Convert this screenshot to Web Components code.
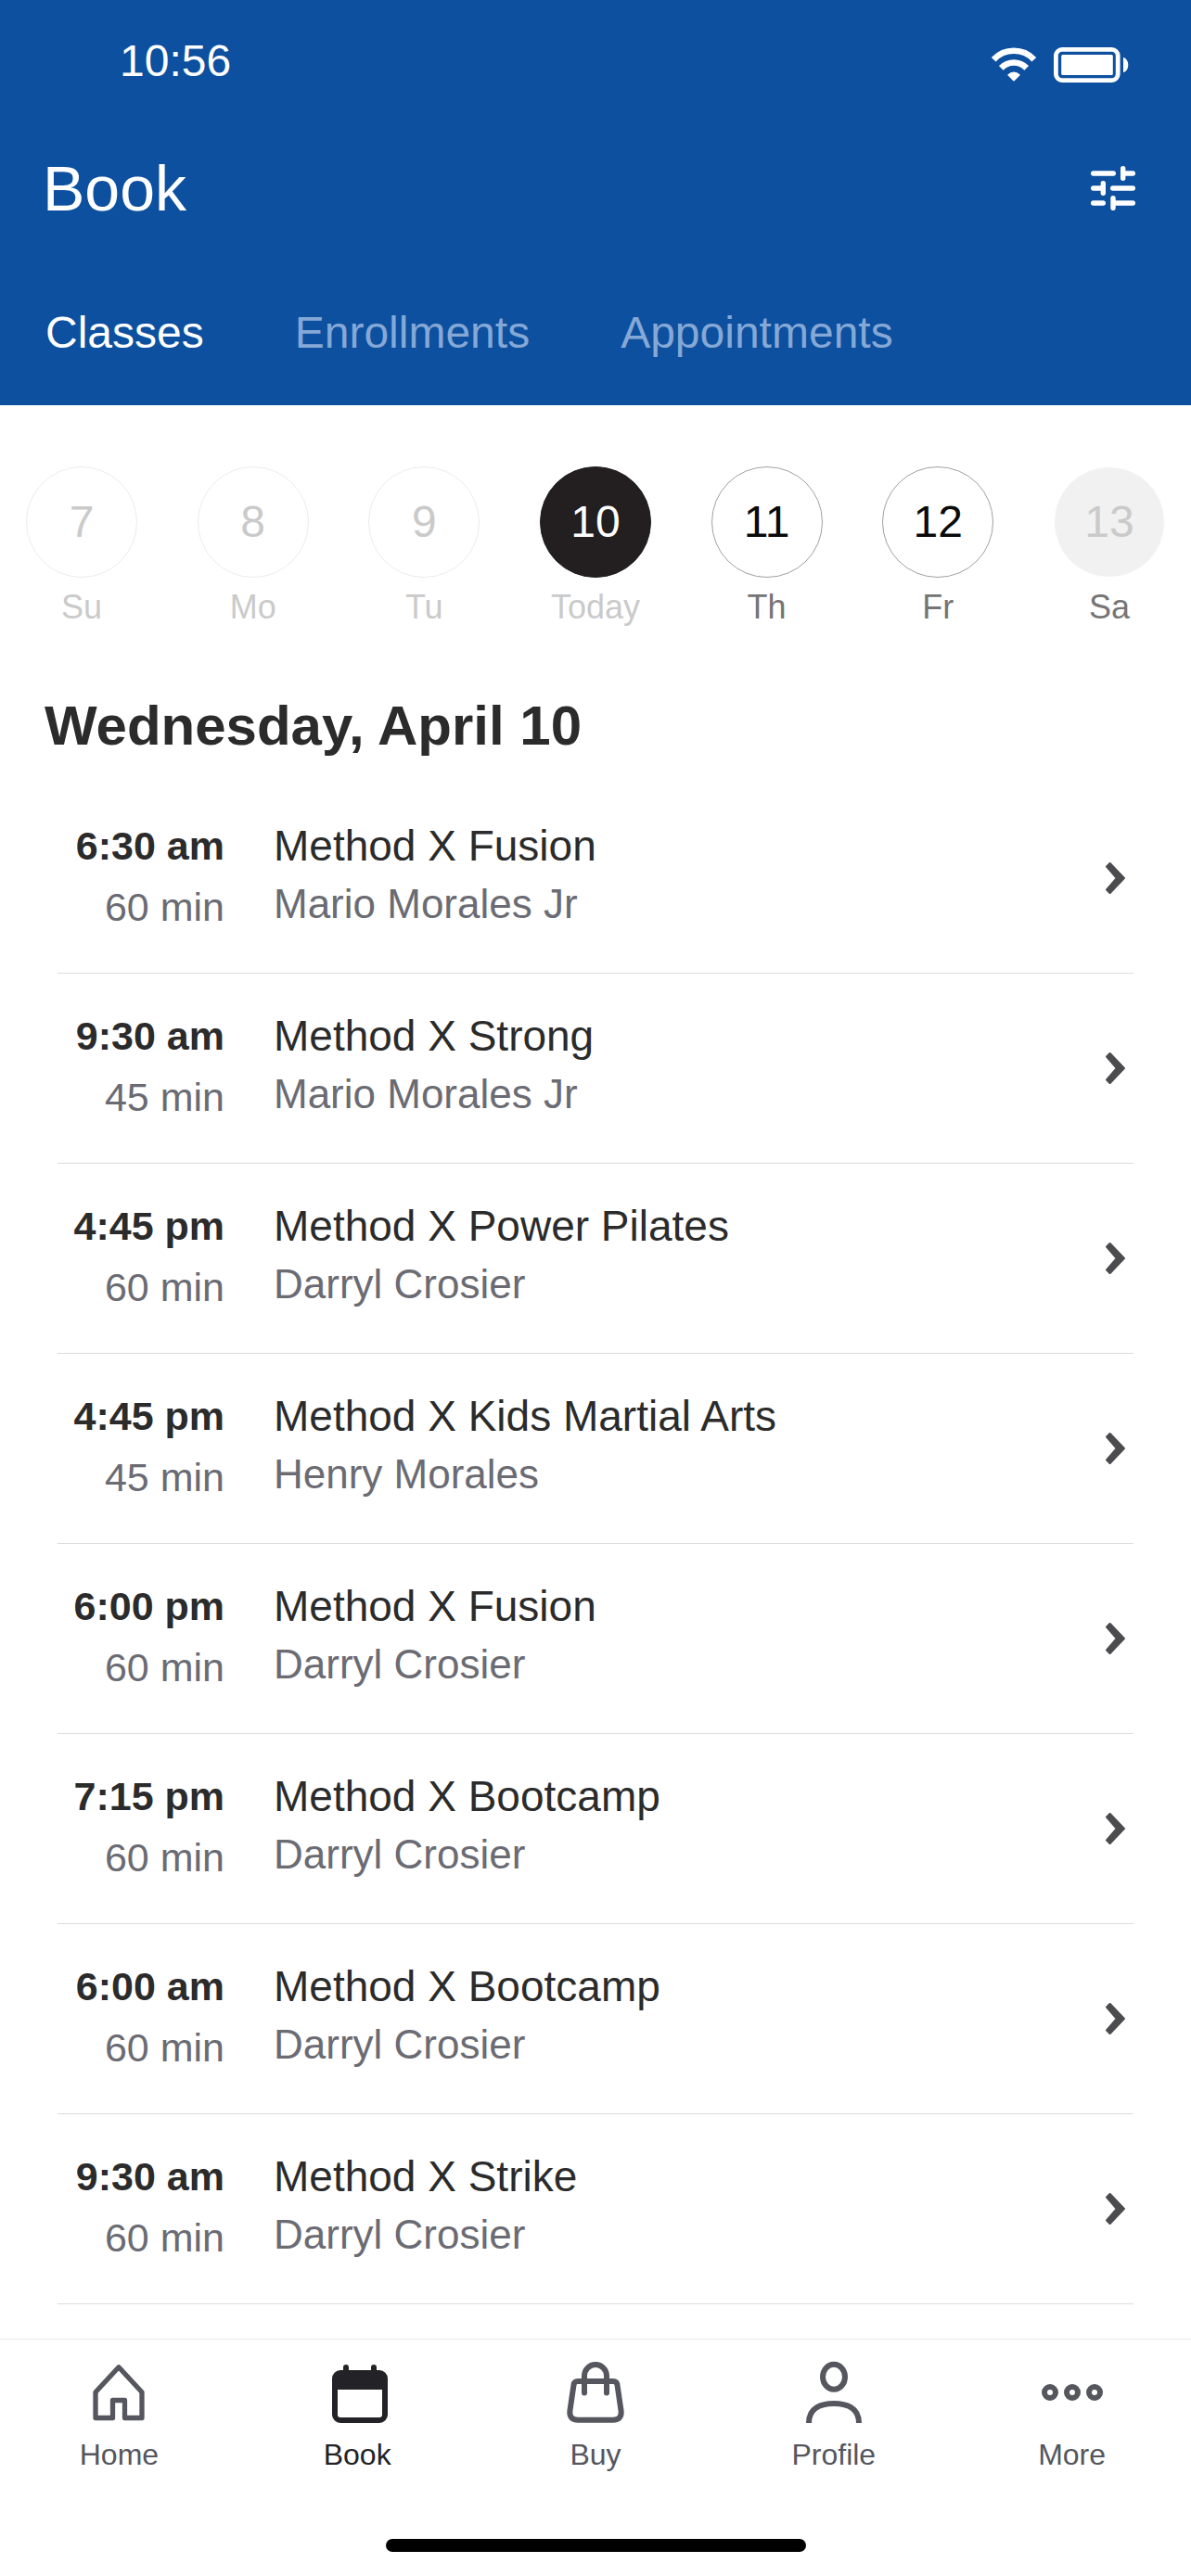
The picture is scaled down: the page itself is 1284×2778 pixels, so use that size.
<!DOCTYPE html>
<html lang="en">
<head>
<meta charset="utf-8">
<meta name="viewport" content="width=device-width, initial-scale=1">
<title>Book</title>
<style>
  body {
    margin: 0;
    min-height: 100vh;
    display: flex;
    flex-direction: column;
    background: #fff;
    color: #2b2b2b;
    font-family: "Liberation Sans", Arial, sans-serif;
  }
  main { flex: 1; padding-bottom: 37px; }
</style>
</head>
<body>
<app-header heading="Book">
  <status-bar slot="status">10:56</status-bar>
  <header-tab active>Classes</header-tab>
  <header-tab>Enrollments</header-tab>
  <header-tab>Appointments</header-tab>
</app-header>

<main>
  <date-strip>
    <day-chip day="7" state="past">Su</day-chip>
    <day-chip day="8" state="past">Mo</day-chip>
    <day-chip day="9" state="past">Tu</day-chip>
    <day-chip day="10" state="selected">Today</day-chip>
    <day-chip day="11">Th</day-chip>
    <day-chip day="12">Fr</day-chip>
    <day-chip day="13" state="closed">Sa</day-chip>
  </date-strip>
  <class-list heading="Wednesday, April 10">
    <class-row time="6:30 am" length="60 min" coach="Mario Morales Jr">Method X Fusion</class-row>
    <class-row time="9:30 am" length="45 min" coach="Mario Morales Jr">Method X Strong</class-row>
    <class-row time="4:45 pm" length="60 min" coach="Darryl Crosier">Method X Power Pilates</class-row>
    <class-row time="4:45 pm" length="45 min" coach="Henry Morales">Method X Kids Martial Arts</class-row>
    <class-row time="6:00 pm" length="60 min" coach="Darryl Crosier">Method X Fusion</class-row>
    <class-row time="7:15 pm" length="60 min" coach="Darryl Crosier">Method X Bootcamp</class-row>
    <class-row time="6:00 am" length="60 min" coach="Darryl Crosier">Method X Bootcamp</class-row>
    <class-row time="9:30 am" length="60 min" coach="Darryl Crosier">Method X Strike</class-row>
  </class-list>
</main>

<bottom-nav>
  <nav-item icon="home">Home</nav-item>
  <nav-item icon="book" active>Book</nav-item>
  <nav-item icon="buy">Buy</nav-item>
  <nav-item icon="profile">Profile</nav-item>
  <nav-item icon="more">More</nav-item>
</bottom-nav>

<script>
  const RESET = `
    *, ::before, ::after { box-sizing: border-box; }
    button { font: inherit; color: inherit; background: none; border: 0; padding: 0; margin: 0; cursor: pointer; }
    a { color: inherit; text-decoration: none; }
    svg { display: block; }
    h1, h2, h3, p { margin: 0; font-weight: inherit; }
  `;

  class BaseElement extends HTMLElement {
    connectedCallback() {
      if (this.shadowRoot) return;
      this.attachShadow({ mode: 'open' }).innerHTML =
        `<style>${RESET}${this.styles()}</style>${this.markup()}`;
    }
    attr(name) { return this.getAttribute(name) || ''; }
  }

  customElements.define('status-bar', class extends BaseElement {
    styles() {
      return `
        :host { display: flex; justify-content: space-between; align-items: center;
                padding: 0 67px 0 129px; font-size: 48px; line-height: 56px; }
        .icons { display: flex; align-items: center; gap: 18px; padding-top: 8px; }
      `;
    }
    markup() {
      return `
        <time><slot></slot></time>
        <div class="icons">
          <svg width="50" height="40" viewBox="0 0 50 40" fill="none" stroke="#fff" stroke-width="6.6" role="img" aria-label="Wi-Fi">
            <path d="M3.2 14.2A30 30 0 0 1 46.8 14.2"/>
            <path d="M11.3 23.4A19 19 0 0 1 38.7 23.4"/>
            <path d="M18 30.8Q25 24.4 32 30.8L25.6 37.2Q25 37.8 24.4 37.2Z" fill="#fff" stroke="none"/>
          </svg>
          <svg width="81" height="38" viewBox="0 0 81 38" role="img" aria-label="Battery full">
            <rect x="2.4" y="2.4" width="66.8" height="33.2" rx="6.6" fill="none" stroke="#fff" stroke-width="4.8"/>
            <rect x="8.2" y="8" width="55.6" height="22" rx="1.5" fill="#fff"/>
            <path d="M75 10.7C78.500 12 80.300 15 80.300 19S78.500 26 75 27.300Z" fill="#fff"/>
          </svg>
        </div>`;
    }
  });

  customElements.define('app-header', class extends BaseElement {
    styles() {
      return `
        :host { display: block; background: #0c509f; color: #fff; padding: 38px 0 50px; }
        .bar { display: flex; justify-content: space-between; align-items: center;
               margin-top: 69px; padding: 0 60px 0 46px; }
        h1 { font-size: 68px; line-height: 80px; }
        .tabs { display: flex; gap: 98px; margin-top: 88px; padding: 0 49px; }
      `;
    }
    markup() {
      return `
        <slot name="status"></slot>
        <div class="bar">
          <h1>${this.attr('heading')}</h1>
          <button type="button" aria-label="Filter classes">
            <svg width="48" height="48" viewBox="0 0 48 48" fill="none" stroke="#fff" stroke-width="5.400" stroke-linecap="round">
              <path d="M2.700 8H24.300M34.700 2.700V13.300M34.700 8H45.300"/>
              <path d="M2.700 24H13.300M13.300 18.700V29.300M23.700 24H45.300"/>
              <path d="M2.700 40H13.300M24 34.700V45.300M24 40H45.300"/>
            </svg>
          </button>
        </div>
        <div class="tabs" role="tablist"><slot></slot></div>`;
    }
  });

  customElements.define('header-tab', class extends BaseElement {
    styles() {
      return `
        :host { display: block; font-size: 48px; line-height: 56px; color: #85a8d6; }
        :host([active]) { color: #fff; }
        button { display: block; }
      `;
    }
    markup() {
      return `<button type="button" role="tab" aria-selected="${this.hasAttribute('active')}"><slot></slot></button>`;
    }
  });

  customElements.define('date-strip', class extends BaseElement {
    styles() {
      return `:host { display: flex; justify-content: space-between; padding: 66px 28px 0; }`;
    }
    markup() { return `<slot></slot>`; }
  });

  customElements.define('day-chip', class extends BaseElement {
    styles() {
      return `
        :host { display: block; --ring: #a0a0a0; --fill: #fff; --number: #0a0a0a; --label: #757575; }
        :host([state="past"]) { --ring: #ececec; --number: #cacaca; --label: #cacaca; }
        :host([state="selected"]) { --ring: #231f20; --fill: #231f20; --number: #fff; --label: #cacaca; }
        :host([state="closed"]) { --ring: #fff; --fill: #f1f1f1; --number: #cacaca; }
        button { display: flex; flex-direction: column; align-items: center; gap: 12px; width: 120px; }
        .number { display: grid; place-items: center; width: 120px; height: 120px;
                  border: 1px solid var(--ring); border-radius: 50%; background: var(--fill);
                  color: var(--number); font-size: 48px; line-height: 56px; }
        .label { color: var(--label); font-size: 36px; line-height: 40px; }
      `;
    }
    markup() {
      return `
        <button type="button">
          <span class="number">${this.attr('day')}</span>
          <span class="label"><slot></slot></span>
        </button>`;
    }
  });

  customElements.define('class-list', class extends BaseElement {
    styles() {
      return `
        :host { display: block; padding-top: 72px; }
        h2 { padding: 0 48px; font-size: 60px; line-height: 72px; font-weight: 700; color: #2b2b2b; }
        .rows { margin: 26px 62px 0; }
      `;
    }
    markup() {
      return `<h2>${this.attr('heading')}</h2><div class="rows"><slot></slot></div>`;
    }
  });

  customElements.define('class-row', class extends BaseElement {
    styles() {
      return `
        :host { display: block; border-bottom: 1px solid #dcdcdc; }
        a { display: grid; grid-template-columns: 180px 1fr auto; column-gap: 53px;
            align-items: center; min-height: 204px; padding-right: 9px; }
        .when { display: grid; row-gap: 16px; padding-bottom: 4px; text-align: right;
                font-size: 43px; line-height: 50px; }
        .when time { font-weight: 700; }
        .what { display: grid; row-gap: 11px; padding-bottom: 9px; }
        h3 { font-size: 46px; line-height: 54px; }
        p { font-size: 44px; line-height: 50px; }
        .muted { color: #6b6b73; }
      `;
    }
    markup() {
      return `
        <a href="#">
          <div class="when"><time>${this.attr('time')}</time><span class="muted">${this.attr('length')}</span></div>
          <div class="what"><h3><slot></slot></h3><p class="muted">${this.attr('coach')}</p></div>
          <svg width="21" height="34" viewBox="0 0 21 34" aria-hidden="true">
            <path d="M4.600 1.200L19.800 17L4.600 32.800L1.200 29.500L12 17L1.200 4.500Z" fill="#4c4c50" stroke="#4c4c50" stroke-width="2.400" stroke-linejoin="round"/>
          </svg>
        </a>`;
    }
  });

  customElements.define('bottom-nav', class extends BaseElement {
    styles() {
      return `
        :host { display: block; border-top: 1px solid #e9e9e9; padding: 21px 0 26px; background: #fff; }
        nav { display: grid; grid-template-columns: repeat(5, 1fr); }
        .indicator { width: 453px; max-width: 60%; height: 14px; margin: 71px auto 0;
                     border-radius: 7px; background: #000; }
      `;
    }
    markup() {
      return `<nav aria-label="Main"><slot></slot></nav><div class="indicator"></div>`;
    }
  });

  const ICONS = {
    home: `<path d="M36 8.800L11 35.800V63.500H29.500V44.500H42.500V63.500H61V35.800Z" stroke-width="5.300"/>`,
    book: `
      <path d="M24 9V18M54 9V18" stroke-width="6"/>
      <path fill="currentColor" fill-rule="evenodd" stroke="none"
        d="M18 12H60A9 9 0 0 1 69 21V60A9 9 0 0 1 60 69H18A9 9 0 0 1 9 60V21A9 9 0 0 1 18 12ZM15 33V60A3 3 0 0 0 18 63H60A3 3 0 0 0 63 60V33Z"/>`,
    buy: `
      <path d="M17 24H55Q59 24 59.500 28L63.600 56Q64.500 65.700 55 65.700H17Q7.500 65.700 8.400 56L12.500 28Q13 24 17 24Z"/>
      <path d="M24 36.500V18A12 12 0 0 1 48 18V36.500"/>`,
    profile: `
      <ellipse cx="36" cy="19.300" rx="12" ry="13.500"/>
      <path d="M9 69C9 52 23 48 36 48S63 52 63 69" stroke-linecap="butt"/>`,
    more: `<circle cx="12" cy="36" r="6"/><circle cx="36" cy="36" r="6"/><circle cx="60" cy="36" r="6"/>`
  };

  customElements.define('nav-item', class extends BaseElement {
    styles() {
      return `
        :host { display: block; color: #55565e; }
        :host([active]) { color: #232327; }
        a { display: flex; flex-direction: column; align-items: center; gap: 11px;
            font-size: 32px; line-height: 40px; }
      `;
    }
    markup() {
      const current = this.hasAttribute('active') ? ' aria-current="page"' : '';
      return `
        <a href="#"${current}>
          <svg width="72" height="72" viewBox="0 0 72 72" fill="none" stroke="currentColor" stroke-width="6"
            stroke-linecap="round" stroke-linejoin="round" aria-hidden="true">${ICONS[this.attr('icon')]}</svg>
          <span><slot></slot></span>
        </a>`;
    }
  });
</script>
</body>
</html>
